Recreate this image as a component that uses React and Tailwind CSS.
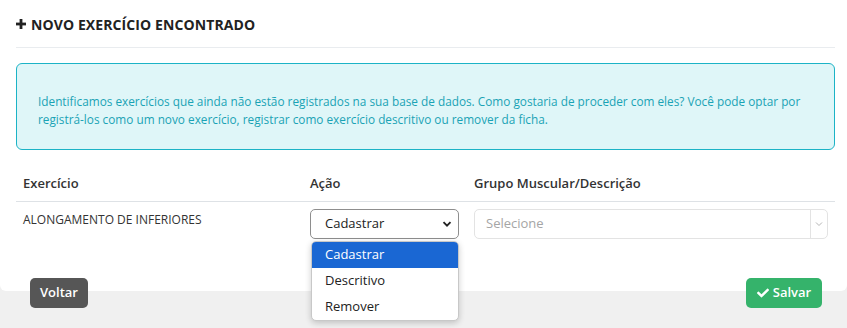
import { FaCheck } from "react-icons/fa";

const App = () => {
  return (
    <div
      className="relative w-full h-[328px] bg-[#f0f0f0] overflow-hidden text-[#333]"
      style={{ fontFamily: '"Open Sans", "Liberation Sans", sans-serif' }}
    >
      <div className="bg-white h-[291px] rounded-b-[6px] pl-4 pr-[12px]">
        <div className="h-[48px] flex items-center border-b border-[#e9ecef] pt-[1px]">
          <svg width="10" height="10" viewBox="0 0 10 10" className="mr-[5px]">
            <rect x="3.6" y="0" width="2.8" height="10" fill="#222" />
            <rect x="0" y="3.6" width="10" height="2.8" fill="#222" />
          </svg>
          <span className="text-[14px] font-bold text-[#222] tracking-[0.1px]">NOVO EXERCÍCIO ENCONTRADO</span>
        </div>

        <div className="mt-[15px] h-[87px] border border-[#1cb3c6] bg-[#dff6f8] rounded-[6px] pt-[28px] pl-[21px] pr-4">
          <p className="text-[11.8px] leading-[18px] text-[#1aa3b5]">
            Identificamos exercícios que ainda não estão registrados na sua base de dados. Como gostaria de proceder com eles? Você pode optar por
            registrá-los como um novo exercício, registrar como exercício descritivo ou remover da ficha.
          </p>
        </div>

        <div className="mt-[17px] flex h-[35px] items-center border-b border-[#dee2e6] text-[13px] font-semibold text-[#333]">
          <div className="w-[294px] pl-[7px]">Exercício</div>
          <div className="w-[164px]">Ação</div>
          <div className="flex-1">Grupo Muscular/Descrição</div>
        </div>

        <div className="flex pt-[7px]">
          <div className="w-[294px] pl-[7px] pt-[2px] text-[12px] text-[#333]">ALONGAMENTO DE INFERIORES</div>
          <div className="w-[164px]">
            <div className="w-[149px] h-[30px] border border-[#8e8e8e] rounded-[5px] flex items-center justify-between pl-[14px] pr-[6px] text-[13px] text-[#222]">
              <span>Cadastrar</span>
              <svg width="10" height="10" viewBox="0 0 10 10">
                <path d="M1.5 3.2 L5 6.7 L8.5 3.2" fill="none" stroke="#222" strokeWidth="1.9" />
              </svg>
            </div>
          </div>
          <div className="flex-1 pr-[7px]">
            <div className="h-[30px] border border-[#e3e3e3] rounded-[5px] flex items-center text-[13px]">
              <span className="flex-1 pl-[11px] text-[#a5a5a5]">Selecione</span>
              <div className="h-full border-l border-[#e3e3e3] w-[17px] flex items-center justify-center">
                <svg width="8" height="6" viewBox="0 0 8 6">
                  <path d="M1 1.5 L4 4.5 L7 1.5" fill="none" stroke="#b5b5b5" strokeWidth="1" />
                </svg>
              </div>
            </div>
          </div>
        </div>
      </div>

      <div className="flex justify-between items-center pl-[30px] pr-[25px] -mt-[13px]">
        <button className="h-[30px] w-[58px] bg-[#565656] text-white rounded-[5px] text-[13px] font-semibold">
          Voltar
        </button>
        <button className="h-[30px] w-[76px] bg-[#35b36b] text-white rounded-[5px] text-[13px] font-semibold flex items-center justify-center gap-[4px]">
          <FaCheck className="text-[12px]" />
          Salvar
        </button>
      </div>

      <div className="absolute z-10 left-[311px] top-[241px] w-[148px] bg-white rounded-[5px] border border-[#c8c8c8] shadow-[0_2px_6px_rgba(0,0,0,0.2)] overflow-hidden text-[13px]">
        <div className="h-[26px] flex items-center pl-[13px] bg-[#1a67d3] text-white">Cadastrar</div>
        <div className="h-[26px] flex items-center pl-[13px] text-[#222]">Descritivo</div>
        <div className="h-[26px] flex items-center pl-[13px] text-[#222]">Remover</div>
      </div>
    </div>
  );
};

export default App;
